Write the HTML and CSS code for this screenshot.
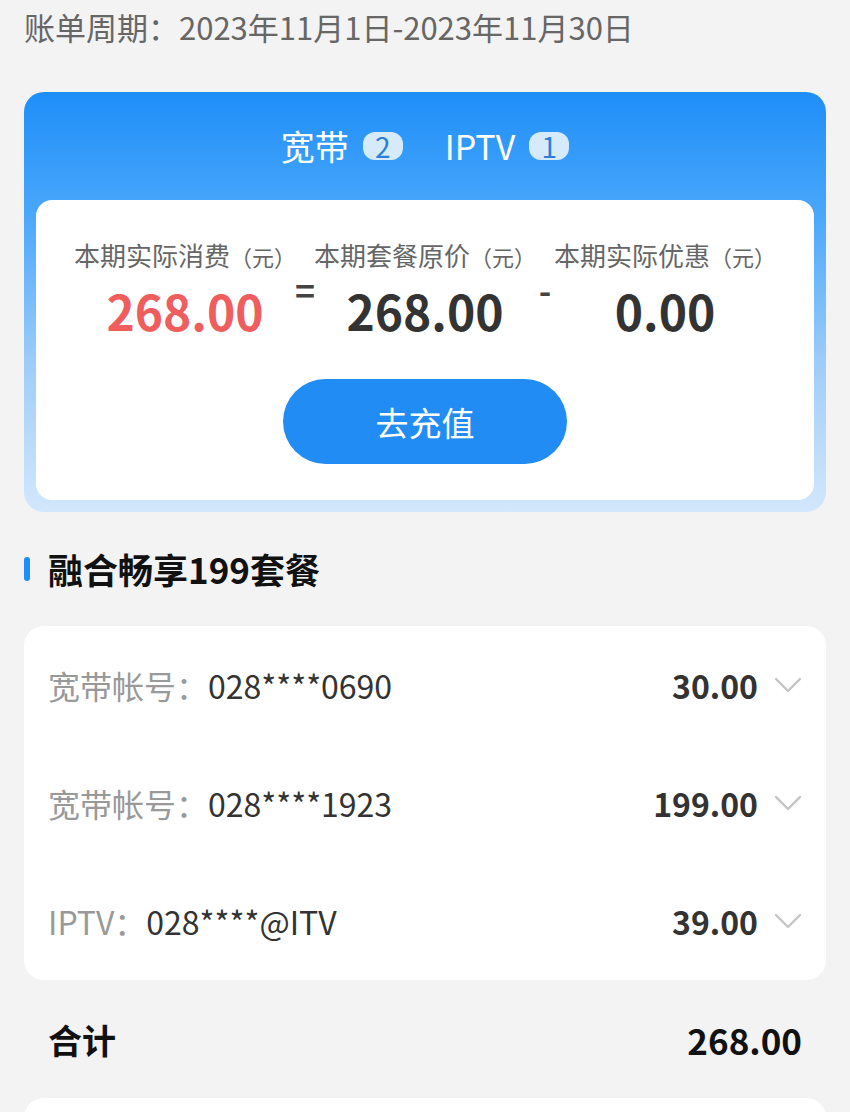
FILE: index.html
```html
<!DOCTYPE html>
<html lang="zh-CN">
<head>
<meta charset="utf-8">
<title>账单</title>
<link rel="stylesheet" href="styles.css">
</head>
<body>
<div class="page">
  <div class="period">账单周期：2023年11月1日-2023年11月30日</div>

  <div class="bill-card">
    <div class="tabs">
      <div class="tab">宽带<span class="badge">2</span></div>
      <div class="tab">IPTV<span class="badge">1</span></div>
    </div>
    <div class="summary">
      <div class="cols">
        <div class="col">
          <div class="label">本期实际消费<span class="unit">（元）</span></div>
          <div class="num red">268.00</div>
        </div>
        <div class="op">=</div>
        <div class="col">
          <div class="label">本期套餐原价<span class="unit">（元）</span></div>
          <div class="num">268.00</div>
        </div>
        <div class="op">-</div>
        <div class="col">
          <div class="label">本期实际优惠<span class="unit">（元）</span></div>
          <div class="num">0.00</div>
        </div>
      </div>
      <button class="recharge">去充值</button>
    </div>
  </div>

  <div class="section-title"><span class="bar"></span>融合畅享199套餐</div>

  <div class="list-card">
    <div class="row">
      <div class="row-left"><span class="row-label">宽带帐号：</span><span class="row-value">028****0690</span></div>
      <div class="row-right"><span class="amount">30.00</span>
        <svg class="chev" width="28" height="16" viewBox="0 0 28 16"><polyline points="2,2 14,14 26,2" fill="none" stroke="#c4c4c4" stroke-width="2.4" stroke-linecap="round" stroke-linejoin="round"/></svg>
      </div>
    </div>
    <div class="row">
      <div class="row-left"><span class="row-label">宽带帐号：</span><span class="row-value">028****1923</span></div>
      <div class="row-right"><span class="amount">199.00</span>
        <svg class="chev" width="28" height="16" viewBox="0 0 28 16"><polyline points="2,2 14,14 26,2" fill="none" stroke="#c4c4c4" stroke-width="2.4" stroke-linecap="round" stroke-linejoin="round"/></svg>
      </div>
    </div>
    <div class="row">
      <div class="row-left"><span class="row-label">IPTV：</span><span class="row-value">028****@ITV</span></div>
      <div class="row-right"><span class="amount">39.00</span>
        <svg class="chev" width="28" height="16" viewBox="0 0 28 16"><polyline points="2,2 14,14 26,2" fill="none" stroke="#c4c4c4" stroke-width="2.4" stroke-linecap="round" stroke-linejoin="round"/></svg>
      </div>
    </div>
  </div>

  <div class="total">
    <span class="total-label">合计</span>
    <span class="total-value">268.00</span>
  </div>

  <div class="next-card"></div>
</div>
</body>
</html>
```

FILE: styles.css
```css
* { box-sizing: border-box; }
html, body { margin: 0; padding: 0; }
body {
  background: #f3f3f3;
  font-family: "Noto Sans CJK SC", "Noto Sans", sans-serif;
  color: #333;
}
.page {
  padding: 0 24px;
  height: 1112px;
  overflow: hidden;
}
.period {
  padding-top: 6px;
  font-size: 31px;
  line-height: 42px;
  color: #666;
  white-space: nowrap;
}
.bill-card {
  margin-top: 44px;
  border-radius: 20px;
  background: linear-gradient(180deg, #1e8ef8 0%, #4ba8fb 30%, #9fcdf9 65%, #d3e7fc 100%);
  padding: 0 12px 12px;
}
.tabs {
  height: 108px;
  display: flex;
  justify-content: center;
  align-items: center;
  gap: 42px;
}
.tab {
  display: flex;
  align-items: center;
  gap: 14px;
  color: #fff;
  font-size: 34px;
  line-height: 44px;
}
.badge {
  display: inline-flex;
  align-items: center;
  justify-content: center;
  width: 40px;
  height: 28px;
  border-radius: 12px;
  background: #d5ebfc;
  color: #2a80d6;
  font-size: 28px;
  line-height: 28px;
}
.summary {
  background: #fff;
  border-radius: 16px;
  padding: 38px 0 36px;
  display: flex;
  flex-direction: column;
  align-items: center;
}
.cols {
  display: flex;
  justify-content: center;
  align-items: flex-start;
}
.col {
  width: 216px;
  display: flex;
  flex-direction: column;
  align-items: center;
}
.label {
  font-size: 26px;
  line-height: 34px;
  color: #666;
  white-space: nowrap;
}
.unit { font-size: 22px; }
.num {
  margin-top: 5px;
  font-size: 48px;
  font-weight: 700;
  line-height: 64px;
  color: #333;
}
.num.red { color: #ef5d5d; }
.op {
  width: 24px;
  text-align: center;
  margin-top: 30px;
  font-size: 34px;
  font-weight: 700;
  color: #444;
  line-height: 44px;
}
.recharge {
  margin-top: 37px;
  width: 284px;
  height: 85px;
  border: none;
  border-radius: 43px;
  background: #218cf4;
  color: #fff;
  font-family: inherit;
  font-size: 33px;
  padding: 0;
}
.section-title {
  margin-top: 35px;
  display: flex;
  align-items: center;
  gap: 18px;
  font-size: 35px;
  font-weight: 700;
  line-height: 44px;
  color: #111;
}
.bar {
  width: 6px;
  height: 24px;
  border-radius: 3px;
  background: #1e8ef8;
}
.list-card {
  margin-top: 35px;
  background: #fff;
  border-radius: 20px;
  padding: 0 24px;
}
.row {
  height: 118px;
  display: flex;
  align-items: center;
  justify-content: space-between;
  font-size: 32px;
}
.row-label { color: #999; }
.row-value { color: #333; }
.row-right {
  display: flex;
  align-items: center;
  gap: 16px;
}
.amount {
  font-weight: 700;
  color: #333;
}
.chev { display: block; }
.total {
  height: 118px;
  padding: 0 24px;
  display: flex;
  align-items: center;
  justify-content: space-between;
  font-weight: 700;
  color: #111;
}
.total-label { font-size: 34px; }
.total-value { font-size: 35px; }
.next-card {
  height: 80px;
  background: #fff;
  border-radius: 20px;
}
```
